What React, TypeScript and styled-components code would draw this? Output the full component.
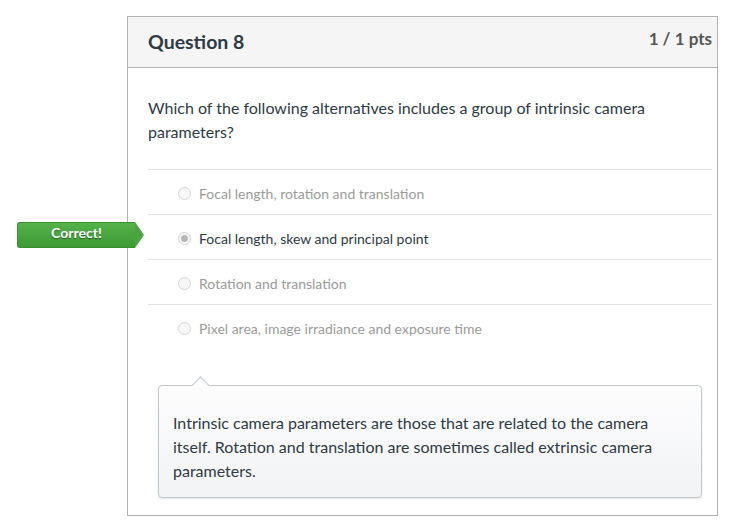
import React from "react";
import styled, { createGlobalStyle } from "styled-components";

const Global = createGlobalStyle`
  html, body { margin: 0; padding: 0; background: #fff; }
  body { font-family: Lato, "Noto Sans", "Liberation Sans", sans-serif; color: #2d3b45; }
  * { box-sizing: border-box; }
`;

const Page = styled.div`
  position: relative;
  padding: 16px 0 0 127px;
  width: 752px;
`;

const Card = styled.div`
  position: relative;
  width: 591px;
  border: 1px solid #b3b3b3;
  background: #fff;
`;

const Header = styled.div`
  display: flex;
  justify-content: space-between;
  align-items: flex-start;
  height: 51px;
  padding: 0 5px 0 20px;
  background: #f5f5f5;
  border-bottom: 1px solid #b3b3b3;
`;

const Title = styled.h2`
  margin: 12px 0 0;
  font-size: 19.5px;
  font-weight: 700;
  line-height: 26px;
  color: #2d3b45;
`;

const Points = styled.div`
  margin-top: 11px;
  font-size: 17px;
  font-weight: 700;
  line-height: 22px;
  color: #555;
`;

const Body = styled.div`
  padding: 28px 5px 17px 20px;
`;

const QuestionText = styled.p`
  margin: 0 0 25px;
  font-size: 16px;
  line-height: 24px;
  color: #2d3b45;
`;

const Answers = styled.div`
  display: flex;
  flex-direction: column;
`;

const AnswerRow = styled.div<{ $selected?: boolean }>`
  position: relative;
  display: flex;
  align-items: center;
  height: 45px;
  border-top: 1px solid #e1e1e1;
  padding-left: 30px;
  padding-top: 2px;
  font-size: 14px;
  color: ${(p) => (p.$selected ? "#2d3b45" : "#9b9b9b")};
`;

const Radio = styled.span<{ $checked?: boolean }>`
  display: inline-flex;
  align-items: center;
  justify-content: center;
  width: 13px;
  height: 13px;
  border-radius: 50%;
  border: 1px solid #d5d5d5;
  background: #f7f7f7;
  margin-right: 8px;
  flex: none;
  &::after {
    content: "";
    display: ${(p) => (p.$checked ? "block" : "none")};
    width: 7px;
    height: 7px;
    border-radius: 50%;
    background: #b8b8b8;
  }
`;

const Badge = styled.div`
  position: absolute;
  left: -131px;
  top: 7px;
  width: 118px;
  height: 26px;
  background: linear-gradient(#55b24a, #3d9a35);
  border: 1px solid #3b8f33;
  border-right: none;
  border-radius: 3px 0 0 3px;
  color: #fff;
  font-size: 14px;
  font-weight: 700;
  line-height: 20px;
  text-align: center;
  text-shadow: 0 1px 1px rgba(0, 0, 0, 0.45);
  &::after {
    content: "";
    position: absolute;
    right: -9px;
    top: -1px;
    border-top: 13px solid transparent;
    border-bottom: 13px solid transparent;
    border-left: 9px solid #49a63f;
  }
`;

const CommentWrap = styled.div`
  position: relative;
  margin: 36px 10px 0;
`;

const Comment = styled.div`
  position: relative;
  border: 1px solid #c3c8cd;
  border-radius: 4px;
  background: linear-gradient(#fdfdfe, #f2f3f5);
  box-shadow: 0 1px 2px rgba(0, 0, 0, 0.12);
  padding: 25px 14px 14px;
  font-size: 16px;
  line-height: 24px;
  color: #2d3b45;
  &::before {
    content: "";
    position: absolute;
    left: 35px;
    top: -7px;
    width: 12px;
    height: 12px;
    background: #fdfdfe;
    border-left: 1px solid #c3c8cd;
    border-top: 1px solid #c3c8cd;
    transform: rotate(45deg);
  }
`;

const answers = [
  { text: "Focal length, rotation and translation" },
  { text: "Focal length, skew and principal point", selected: true },
  { text: "Rotation and translation" },
  { text: "Pixel area, image irradiance and exposure time" },
];

export default function App() {
  return (
    <>
      <Global />
      <Page>
        <Card>
          <Header>
            <Title>Question 8</Title>
            <Points>1 / 1 pts</Points>
          </Header>
          <Body>
            <QuestionText>
              Which of the following alternatives includes a group of intrinsic camera
              parameters?
            </QuestionText>
            <Answers>
              {answers.map((a) => (
                <AnswerRow key={a.text} $selected={a.selected}>
                  {a.selected && <Badge>Correct!</Badge>}
                  <Radio $checked={a.selected} />
                  {a.text}
                </AnswerRow>
              ))}
            </Answers>
            <CommentWrap>
              <Comment>
                Intrinsic camera parameters are those that are related to the camera
                itself. Rotation and translation are sometimes called extrinsic camera
                parameters.
              </Comment>
            </CommentWrap>
          </Body>
        </Card>
      </Page>
    </>
  );
}
